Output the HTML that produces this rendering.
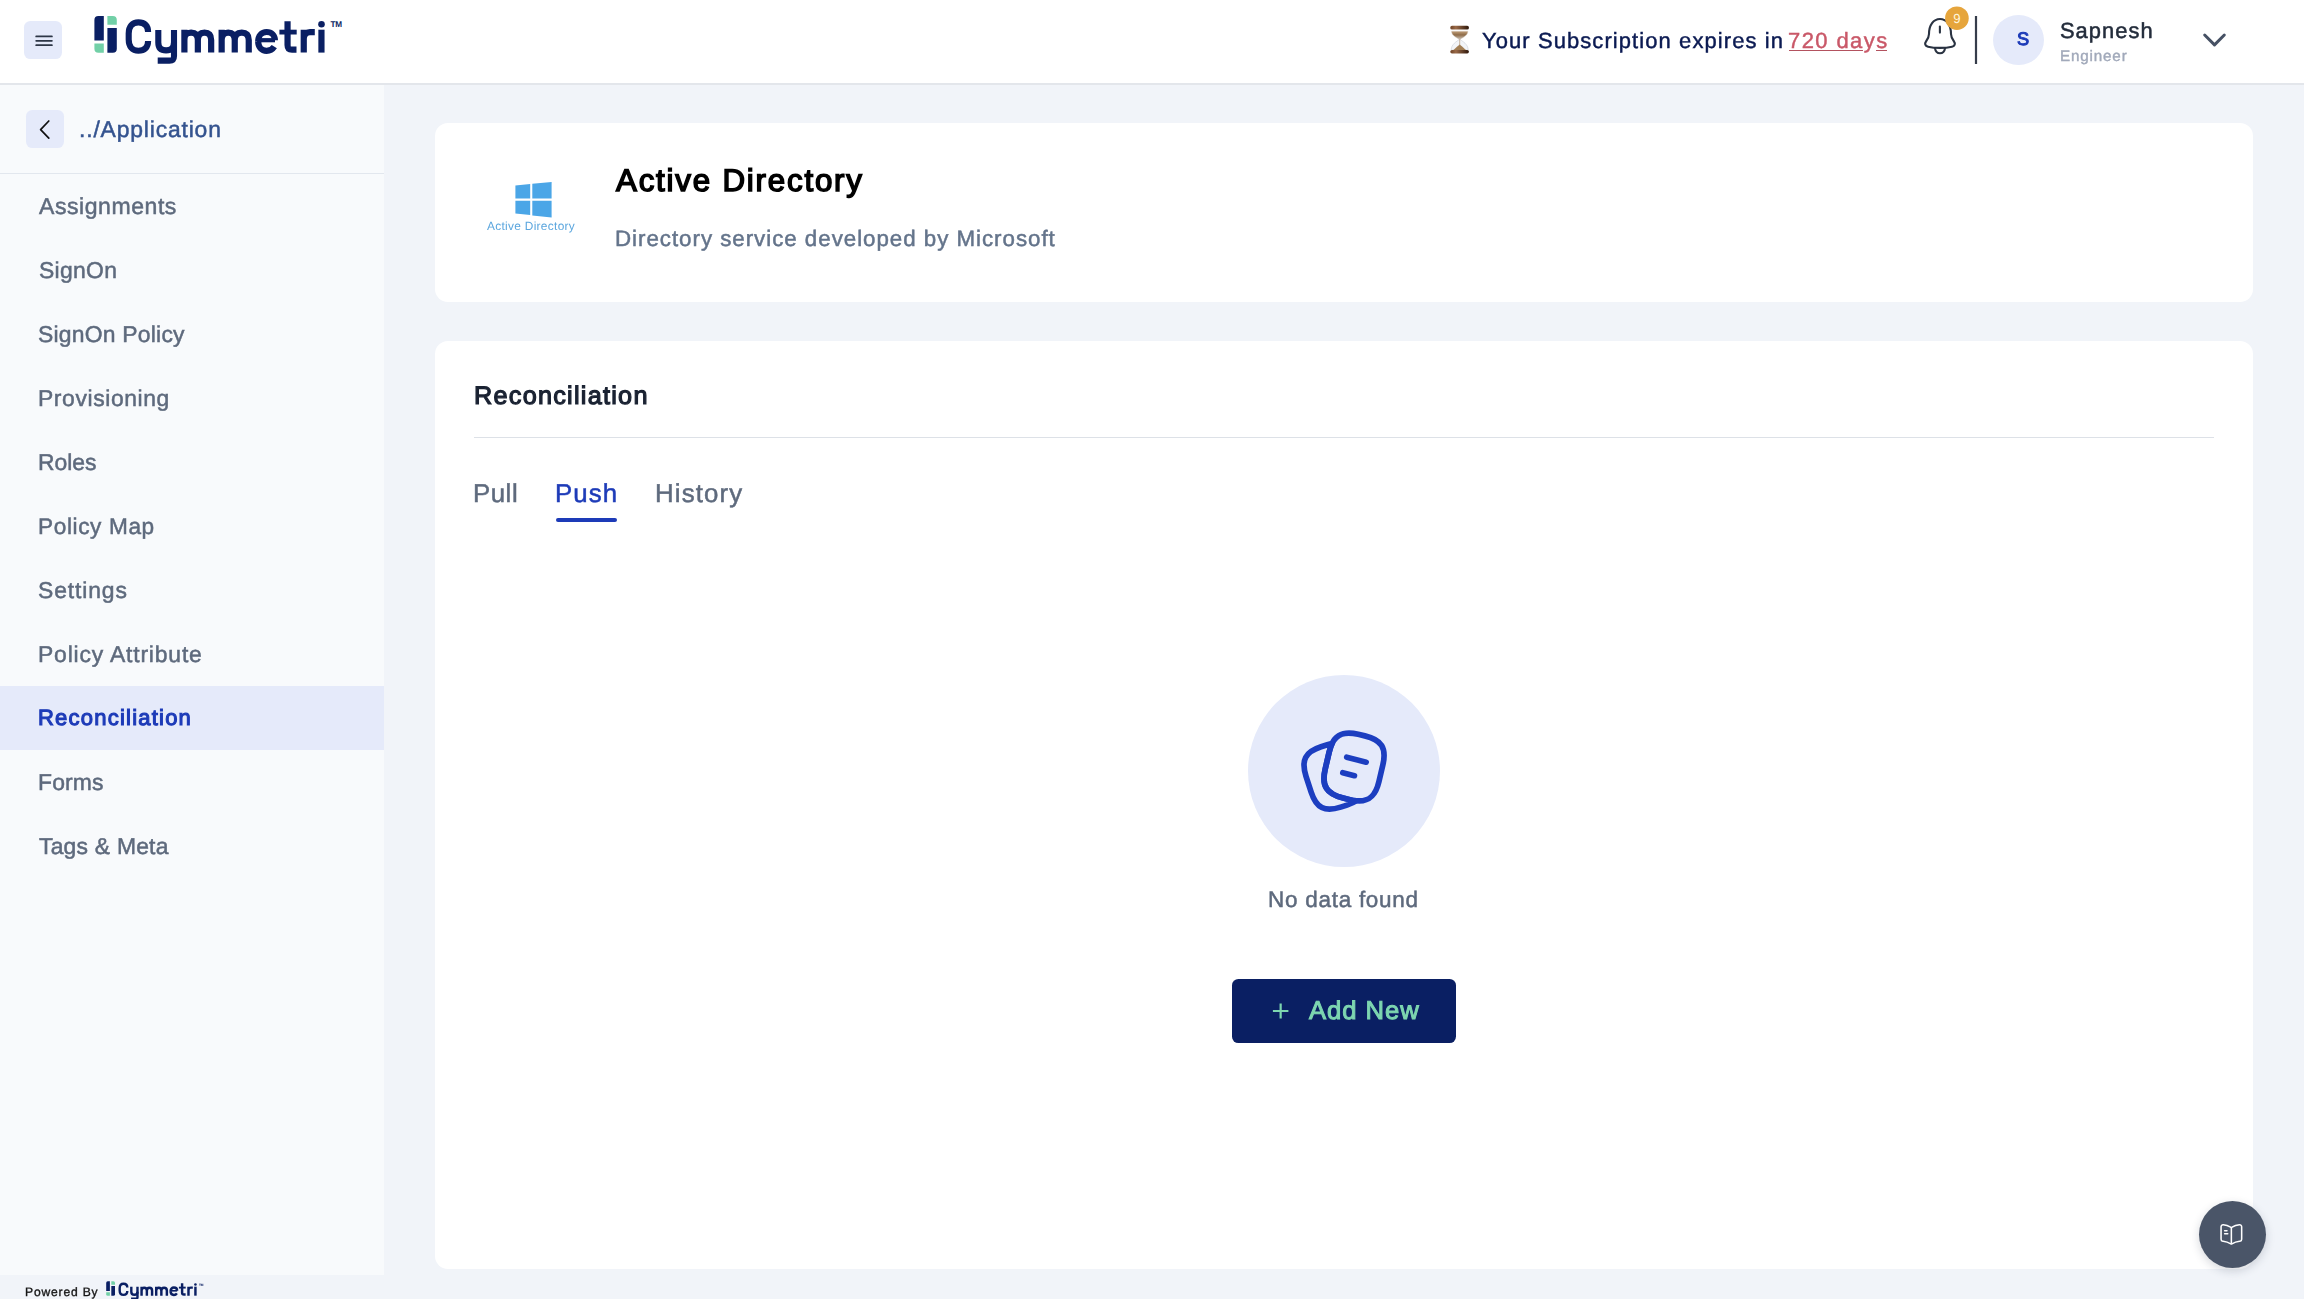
<!DOCTYPE html>
<html><head><meta charset="utf-8">
<style>
*{box-sizing:border-box;margin:0;padding:0}
html,body{width:2304px;height:1299px;overflow:hidden}
body{position:relative;background:#f1f4f9;font-family:"Liberation Sans",sans-serif;text-rendering:geometricPrecision}
.abs{position:absolute}
.t{position:absolute;white-space:nowrap;line-height:1;will-change:transform}
#hdr{left:0;top:0;width:2304px;height:85px;background:#fff;border-bottom:2px solid #e3e6eb}
#side{left:0;top:85px;width:384px;height:1190px;background:#f8fafc}
.card{position:absolute;background:#fff;border-radius:13px}
</style></head><body>
<div id="hdr" class="abs"></div>
<div id="side" class="abs"></div>
<div class="abs" style="left:24px;top:21px;width:38px;height:38px;background:#e5eafa;border-radius:6.4px"></div>
<svg class="abs" style="left:0;top:0" width="70" height="70"><g stroke="#2d3646" stroke-width="1.8" stroke-linecap="round"><path d="M36.2 36.4H51.9M36.2 40.8H51.9M36.2 45.2H51.9"/></g></svg>
<svg class="abs" style="left:0;top:0" width="360" height="70">
<path d="M94.4 40.5 V20.1 Q94.4 16.1 98.4 16.1 H103.8 V40.5 Z" fill="#0a1f63"/>
<path d="M94.4 43.6 H103.8 V52.7 H98.4 Q94.4 52.7 94.4 48.7 Z" fill="#72d0a7"/>
<path d="M107.4 16.1 H112.8 Q116.8 16.1 116.8 20.1 V24.7 H107.4 Z" fill="#72d0a7"/>
<path d="M107.4 28.1 H116.8 V48.7 Q116.8 52.7 112.8 52.7 H107.4 Z" fill="#0a1f63"/>
<g fill="none" stroke="#0a1f63" stroke-width="6.1">
<path d="M148.1 32 C148.1 25.5 144.5 22.4 138.4 22.4 C132.3 22.4 128.7 26.5 128.7 33.5 V39.5 C128.7 46.5 132.3 50.7 138.4 50.7 C144.5 50.7 148.1 47.5 148.1 41"/>
<path d="M158.3 30.1 V42.5 C158.3 47.8 161 50.4 166.1 50.4 C171.2 50.4 174 47.8 174 42.5"/>
<path d="M174 30.1 V56 C174 59.5 172.5 60.6 169.5 60.6 H157.7"/>
</g>
<g fill="none" stroke="#0a1f63" stroke-width="6.2">
<path d="M184.4 52.6 V29.7 M184.4 40 C184.4 35 186.5 32.6 191.1 32.6 C195.7 32.6 197.85 35 197.85 40 V52.6 M197.85 40 C197.85 35 200 32.6 204.5 32.6 C209 32.6 211.15 35 211.15 40 V52.6"/>
<path d="M221.65 52.6 V29.7 M221.65 40 C221.65 35 223.8 32.6 228.2 32.6 C232.6 32.6 234.75 35 234.75 40 V52.6 M234.75 40 C234.75 35 237 32.6 241.75 32.6 C246.5 32.6 248.75 35 248.75 40 V52.6"/>
<path d="M258.2 41.5 C258.2 47 261.5 50.8 266.6 50.8 C270.2 50.8 272.6 49.2 274.3 46.6"/>
<path d="M258.2 41.5 C258.2 36 261.5 32 266.6 32 C271.6 32 274.9 35.6 274.9 40.3"/>
<path d="M287.55 21.2 V45 C287.55 48.5 289 49.7 292 49.7 H296.5"/>
<path d="M303.75 52.6 V29.7 M303.75 39 C303.75 34.5 306 32.1 310 32.1 H314.8"/>
<path d="M321.45 29.7 V52.6"/>
</g>
<path d="M257 40.2 H275" stroke="#0a1f63" stroke-width="4.2"/>
<path d="M279.4 32.1 H296.7" stroke="#0a1f63" stroke-width="4.8"/>
<circle cx="321.5" cy="24.2" r="3.3" fill="#0a1f63"/>
<text x="330.6" y="27.2" font-family="Liberation Sans" font-weight="700" font-size="8.2" fill="#0a1f63" letter-spacing="-0.3">TM</text>
</svg>
<svg class="abs" style="left:1440px;top:20px" width="40" height="40"><g transform="translate(-1440 -20)">
<defs><linearGradient id="cap" x1="0" y1="0" x2="1" y2="0"><stop offset="0" stop-color="#6e4326"/><stop offset="0.3" stop-color="#9a6a48"/><stop offset="1" stop-color="#2e170a"/></linearGradient>
<linearGradient id="sand" x1="0" y1="0" x2="0" y2="1"><stop offset="0" stop-color="#c2a07a"/><stop offset="0.45" stop-color="#8f6c48"/><stop offset="1" stop-color="#cfc6bc"/></linearGradient></defs>
<path d="M1459.1 39.6 H1460.3 C1462.5 41.5 1468.2 44 1468.2 50.2 H1451.2 C1451.2 44 1456.9 41.5 1459.1 39.6Z" fill="#f3f5f8" stroke="#c9cfd6" stroke-width="0.6"/>
<path d="M1451.5 31.2 H1467.9 C1467.9 35.6 1462.5 37.6 1460.3 39.4 H1459.1 C1456.9 37.6 1451.5 35.6 1451.5 31.2Z" fill="url(#sand)" stroke="#d6d0c8" stroke-width="0.4"/>
<path d="M1459.7 39.3 V45" stroke="#a88a68" stroke-width="0.6"/>
<path d="M1453.2 50.2 C1455.8 47.6 1458.4 45.4 1459.7 44.4 C1461 45.4 1463.6 47.6 1466.2 50.2Z" fill="#a27f55"/>
<rect x="1450.3" y="25.8" width="18.6" height="3.8" rx="1.7" fill="url(#cap)"/>
<rect x="1450.3" y="49.9" width="18.6" height="3.5" rx="1.7" fill="url(#cap)"/>
</g></svg>
<svg class="abs" style="left:1910px;top:0" width="80" height="70"><g transform="translate(-1910 0)" fill="none" stroke="#2a3342" stroke-width="2.1" stroke-linecap="round" stroke-linejoin="round">
<path d="M1929 34 C1929 25 1933.5 19 1940 19 C1946.5 19 1951 25 1951 34 C1951 37.5 1952.5 39.5 1954 41.5 C1955.5 43.5 1955 46 1952 46.7 C1948 47.6 1944 47.9 1940 47.9 C1936 47.9 1932 47.6 1928 46.7 C1925 46 1924.5 43.5 1926 41.5 C1927.5 39.5 1929 37.5 1929 34 Z"/>
<path d="M1935 48.3 C1935.5 51.6 1937.5 53.2 1940 53.2 C1942.5 53.2 1944.5 51.6 1945 48.3"/>
<path d="M1939.9 26.6 V32.6"/>
</g>
<g transform="translate(-1910 0)"><circle cx="1956.9" cy="18.2" r="11.8" fill="#e6a53c"/>
<text x="1957" y="23.1" text-anchor="middle" font-family="Liberation Sans" font-size="13.2" fill="#fff6dc">9</text>
<rect x="1974.9" y="16" width="2.2" height="48" fill="#363d4b"/></g></svg>
<div class="abs" style="left:1993.1px;top:14.6px;width:50.6px;height:50.6px;border-radius:50%;background:#e5eafa"></div>
<svg class="abs" style="left:2190px;top:20px" width="50" height="40"><path d="M14.7 15 L24.5 24.9 L34.3 15" fill="none" stroke="#465164" stroke-width="3" stroke-linecap="round" stroke-linejoin="round"/></svg>
<div class="t" style="left:1482.1px;top:30px;font-size:21.96px;font-weight:400;-webkit-text-stroke:0.45px #0b1a52;letter-spacing:1.096px;color:#0b1a52;">Your Subscription expires in</div>
<div class="t" style="left:1788.2px;top:30px;font-size:21.96px;font-weight:400;-webkit-text-stroke:0.45px #c95868;letter-spacing:1.429px;color:#c95868;">720 days</div>
<div class="abs" style="left:1789.2px;top:49.5px;width:73.5px;height:1.4px;background:#b3525f"></div><div class="abs" style="left:1876px;top:49.5px;width:10.7px;height:1.4px;background:#b3525f"></div>
<div class="t" style="left:2059.9px;top:20px;font-size:21.88px;font-weight:400;-webkit-text-stroke:0.5px #232c3b;letter-spacing:1.033px;color:#232c3b;">Sapnesh</div>
<div class="t" style="left:2059.9px;top:49px;font-size:15.22px;font-weight:400;-webkit-text-stroke:0.4px #a1a9ba;letter-spacing:0.829px;color:#a1a9ba;">Engineer</div>
<div class="t" style="left:2016.8px;top:30px;font-size:18.26px;font-weight:400;-webkit-text-stroke:1.0px #1d3bb8;letter-spacing:-3.2px;color:#1d3bb8;">S</div>
<div class="abs" style="left:26px;top:110px;width:38px;height:38px;background:#e5eafa;border-radius:6.4px"></div>
<svg class="abs" style="left:0;top:100px" width="70" height="60"><path d="M48.8 21 L40.6 29.6 L48.8 38.2" fill="none" stroke="#111" stroke-width="1.7" stroke-linecap="round" stroke-linejoin="round"/></svg>
<div class="t" style="left:79.1px;top:118px;font-size:22.9px;font-weight:400;-webkit-text-stroke:0.5px #34538f;letter-spacing:0.831px;color:#34538f;">../Application</div>
<div class="abs" style="left:0;top:172.8px;width:384px;height:1.6px;background:#e2e7ee"></div>
<div class="abs" style="left:0;top:686px;width:384px;height:64px;background:#e5eafa"></div>
<div class="t" style="left:39.05px;top:195px;font-size:23.04px;font-weight:400;-webkit-text-stroke:0.5px #5e6a7d;letter-spacing:0.55px;color:#5e6a7d;">Assignments</div>
<div class="t" style="left:38.5px;top:259px;font-size:22.9px;font-weight:400;-webkit-text-stroke:0.5px #5e6a7d;letter-spacing:0.32px;color:#5e6a7d;">SignOn</div>
<div class="t" style="left:38.2px;top:323px;font-size:22.9px;font-weight:400;-webkit-text-stroke:0.5px #5e6a7d;letter-spacing:0.233px;color:#5e6a7d;">SignOn Policy</div>
<div class="t" style="left:38.2px;top:387px;font-size:22.9px;font-weight:400;-webkit-text-stroke:0.5px #5e6a7d;letter-spacing:0.6px;color:#5e6a7d;">Provisioning</div>
<div class="t" style="left:38.2px;top:451px;font-size:22.9px;font-weight:400;-webkit-text-stroke:0.5px #5e6a7d;letter-spacing:-0.05px;color:#5e6a7d;">Roles</div>
<div class="t" style="left:38.2px;top:516px;font-size:22.61px;font-weight:400;-webkit-text-stroke:0.5px #5e6a7d;letter-spacing:0.622px;color:#5e6a7d;">Policy Map</div>
<div class="t" style="left:38.2px;top:579px;font-size:22.9px;font-weight:400;-webkit-text-stroke:0.5px #5e6a7d;letter-spacing:0.886px;color:#5e6a7d;">Settings</div>
<div class="t" style="left:38.2px;top:643px;font-size:22.9px;font-weight:400;-webkit-text-stroke:0.5px #5e6a7d;letter-spacing:0.827px;color:#5e6a7d;">Policy Attribute</div>
<div class="t" style="left:38.2px;top:707px;font-size:22.03px;font-weight:400;-webkit-text-stroke:1.1px #1d3bb8;letter-spacing:1.215px;color:#1d3bb8;">Reconciliation</div>
<div class="t" style="left:38.2px;top:771px;font-size:22.9px;font-weight:400;-webkit-text-stroke:0.5px #5e6a7d;letter-spacing:0.15px;color:#5e6a7d;">Forms</div>
<div class="t" style="left:39.2px;top:835px;font-size:22.9px;font-weight:400;-webkit-text-stroke:0.5px #5e6a7d;letter-spacing:0.22px;color:#5e6a7d;">Tags &amp; Meta</div>
<div class="t" style="left:25.1px;top:1286px;font-size:12.1px;font-weight:400;-webkit-text-stroke:0.35px #161616;letter-spacing:0.822px;color:#161616;">Powered By</div>
<svg class="abs" style="left:0;top:0" width="260" height="1299"><g transform="translate(69.1 1275) scale(0.393)">
<path d="M94.4 40.5 V20.1 Q94.4 16.1 98.4 16.1 H103.8 V40.5 Z" fill="#0a1f63"/>
<path d="M94.4 43.6 H103.8 V52.7 H98.4 Q94.4 52.7 94.4 48.7 Z" fill="#72d0a7"/>
<path d="M107.4 16.1 H112.8 Q116.8 16.1 116.8 20.1 V24.7 H107.4 Z" fill="#72d0a7"/>
<path d="M107.4 28.1 H116.8 V48.7 Q116.8 52.7 112.8 52.7 H107.4 Z" fill="#0a1f63"/>
<g fill="none" stroke="#0a1f63" stroke-width="6.1">
<path d="M148.1 32 C148.1 25.5 144.5 22.4 138.4 22.4 C132.3 22.4 128.7 26.5 128.7 33.5 V39.5 C128.7 46.5 132.3 50.7 138.4 50.7 C144.5 50.7 148.1 47.5 148.1 41"/>
<path d="M158.3 30.1 V42.5 C158.3 47.8 161 50.4 166.1 50.4 C171.2 50.4 174 47.8 174 42.5"/>
<path d="M174 30.1 V56 C174 59.5 172.5 60.6 169.5 60.6 H157.7"/>
</g>
<g fill="none" stroke="#0a1f63" stroke-width="6.2">
<path d="M184.4 52.6 V29.7 M184.4 40 C184.4 35 186.5 32.6 191.1 32.6 C195.7 32.6 197.85 35 197.85 40 V52.6 M197.85 40 C197.85 35 200 32.6 204.5 32.6 C209 32.6 211.15 35 211.15 40 V52.6"/>
<path d="M221.65 52.6 V29.7 M221.65 40 C221.65 35 223.8 32.6 228.2 32.6 C232.6 32.6 234.75 35 234.75 40 V52.6 M234.75 40 C234.75 35 237 32.6 241.75 32.6 C246.5 32.6 248.75 35 248.75 40 V52.6"/>
<path d="M258.2 41.5 C258.2 47 261.5 50.8 266.6 50.8 C270.2 50.8 272.6 49.2 274.3 46.6"/>
<path d="M258.2 41.5 C258.2 36 261.5 32 266.6 32 C271.6 32 274.9 35.6 274.9 40.3"/>
<path d="M287.55 21.2 V45 C287.55 48.5 289 49.7 292 49.7 H296.5"/>
<path d="M303.75 52.6 V29.7 M303.75 39 C303.75 34.5 306 32.1 310 32.1 H314.8"/>
<path d="M321.45 29.7 V52.6"/>
</g>
<path d="M257 40.2 H275" stroke="#0a1f63" stroke-width="4.2"/>
<path d="M279.4 32.1 H296.7" stroke="#0a1f63" stroke-width="4.8"/>
<circle cx="321.5" cy="24.2" r="3.3" fill="#0a1f63"/>
<text x="330.6" y="27.2" font-family="Liberation Sans" font-weight="700" font-size="8.2" fill="#0a1f63" letter-spacing="-0.3">TM</text>
</g></svg>
<div class="card" style="left:435px;top:123.1px;width:1817.8px;height:179.3px"></div>
<div class="card" style="left:435px;top:340.5px;width:1817.8px;height:928.3px"></div>
<svg class="abs" style="left:480px;top:170px" width="110" height="70"><g transform="translate(-480 -170)" fill="#4ba6e7">
<path d="M515.4 185.4 L530.2 184.0 L530.2 198.5 L515.4 198.5Z"/>
<path d="M532.3 183.8 L551.6 181.9 L551.6 198.5 L532.3 198.5Z"/>
<path d="M515.4 200.8 L530.2 200.8 L530.2 215.1 L515.4 213.5Z"/>
<path d="M532.3 200.8 L551.6 200.8 L551.6 217.5 L532.3 215.4Z"/>
</g></svg>
<div class="t" style="left:487.4px;top:221px;font-size:11.88px;font-weight:400;-webkit-text-stroke:0.0px #5ba6de;letter-spacing:0.307px;color:#5ba6de;">Active Directory</div>
<div class="t" style="left:616.2px;top:165px;font-size:31.3px;font-weight:400;-webkit-text-stroke:1.5px #000000;letter-spacing:1.787px;color:#000000;">Active Directory</div>
<div class="t" style="left:614.6px;top:228px;font-size:22.32px;font-weight:400;-webkit-text-stroke:0.5px #64748b;letter-spacing:0.974px;color:#64748b;">Directory service developed by Microsoft</div>
<div class="t" style="left:473.6px;top:384px;font-size:25.22px;font-weight:400;-webkit-text-stroke:1.2px #1a2232;letter-spacing:1.262px;color:#1a2232;">Reconciliation</div>
<div class="abs" style="left:474px;top:436.6px;width:1740px;height:1.6px;background:#dde1e7"></div>
<div class="t" style="left:473.0px;top:482px;font-size:25.8px;font-weight:400;-webkit-text-stroke:0.5px #5e6a7d;letter-spacing:0.533px;color:#5e6a7d;">Pull</div>
<div class="t" style="left:555.0px;top:482px;font-size:25.8px;font-weight:400;-webkit-text-stroke:0.5px #1d3bb8;letter-spacing:1.067px;color:#1d3bb8;">Push</div>
<div class="t" style="left:654.6px;top:482px;font-size:25.8px;font-weight:400;-webkit-text-stroke:0.5px #5e6a7d;letter-spacing:1.133px;color:#5e6a7d;">History</div>
<div class="abs" style="left:556.4px;top:518.2px;width:60.2px;height:3.4px;border-radius:2px;background:#1d3bb8"></div>
<div class="abs" style="left:1248px;top:675px;width:192px;height:192px;border-radius:50%;background:#e5eafa"></div>
<svg class="abs" style="left:1296.45px;top:723.1px;overflow:visible" width="103" height="103"><g transform="scale(4.01)" fill="none" stroke="#1c3ec0" stroke-width="1.42" stroke-linecap="round" stroke-linejoin="round">
<path d="M21.6602 10.44L20.6802 14.62C19.8402 18.23 18.1802 19.69 15.0602 19.39C14.5602 19.35 14.0202 19.26 13.4402 19.12L11.7602 18.72C7.59018 17.73 6.30018 15.67 7.28018 11.49L8.26018 7.30001C8.46018 6.45001 8.70018 5.71001 9.00018 5.10001C10.1702 2.68001 12.1602 2.03001 15.5002 2.82001L17.1702 3.21001C21.3602 4.19001 22.6402 6.26001 21.6602 10.44Z"/>
<path d="M15.0603 19.3901C14.4403 19.8101 13.6603 20.1601 12.7103 20.4701L11.1303 20.9901C7.16034 22.2701 5.07034 21.2001 3.78034 17.2301L2.50034 13.2801C1.22034 9.3101 2.28034 7.2101 6.25034 5.9301L7.83034 5.4101C8.24034 5.2801 8.63034 5.1701 9.00034 5.1001C8.70034 5.7101 8.46034 6.4501 8.26034 7.3001L7.28034 11.4901C6.30034 15.6701 7.59034 17.7301 11.7603 18.7201L13.4403 19.1201C14.0203 19.2601 14.5603 19.3501 15.0603 19.3901Z"/>
<path d="M12.6504 8.52979L17.5004 9.75979"/>
<path d="M11.6699 12.4004L14.5699 13.1404"/>
</g></svg>
<div class="t" style="left:1268.4px;top:889px;font-size:22.46px;font-weight:400;-webkit-text-stroke:0.5px #5e6a7d;letter-spacing:0.75px;color:#5e6a7d;">No data found</div>
<div class="abs" style="left:1232px;top:979px;width:224px;height:64px;border-radius:6.4px;background:#0a1f63"></div>
<svg class="abs" style="left:1260px;top:990px" width="40" height="40"><path d="M20.65 13.4 V28.5 M12.9 21 H28.4" stroke="#7dd6b0" stroke-width="2.2"/></svg>
<div class="t" style="left:1309.4px;top:999px;font-size:25.65px;font-weight:400;-webkit-text-stroke:1.0px #7dd6b0;letter-spacing:0.967px;color:#7dd6b0;">Add New</div>
<div class="abs" style="left:2198.5px;top:1201.3px;width:67.2px;height:67.2px;border-radius:50%;background:#4a5568;box-shadow:0 3px 10px rgba(30,40,60,.18)"></div>
<svg class="abs" style="left:2219.1px;top:1221.7px;overflow:visible" width="27" height="27"><g transform="scale(1.03)" fill="none" stroke="#fff" stroke-width="1.5" stroke-linecap="round" stroke-linejoin="round">
<path d="M22 16.7399V4.66994C22 3.46994 21.02 2.57994 19.83 2.67994H19.77C17.67 2.85994 14.48 3.92994 12.7 5.04994L12.53 5.15994C12.24 5.33994 11.76 5.33994 11.47 5.15994L11.22 5.00994C9.44 3.89994 6.26 2.83994 4.16 2.66994C2.97 2.56994 2 3.46994 2 4.65994V16.7399C2 17.6999 2.78 18.5999 3.74 18.7199L4.03 18.7599C6.2 19.0499 9.55 20.1499 11.47 21.1999L11.51 21.2199C11.78 21.3699 12.21 21.3699 12.47 21.2199C14.39 20.1599 17.75 19.0499 19.93 18.7599L20.26 18.7199C21.22 18.5999 22 17.6999 22 16.7399Z"/>
<path d="M12 5.48999V20.49"/>
<path d="M7.75 8.48999H5.5"/>
<path d="M8.5 11.49H5.5"/>
</g></svg>
<script>(function(){var w=window.innerWidth;if(w&&Math.abs(w-2304)>2){var s=w/2304;var b=document.body;b.style.transformOrigin="0 0";b.style.transform="scale("+s+")";}})();</script>
</body></html>
